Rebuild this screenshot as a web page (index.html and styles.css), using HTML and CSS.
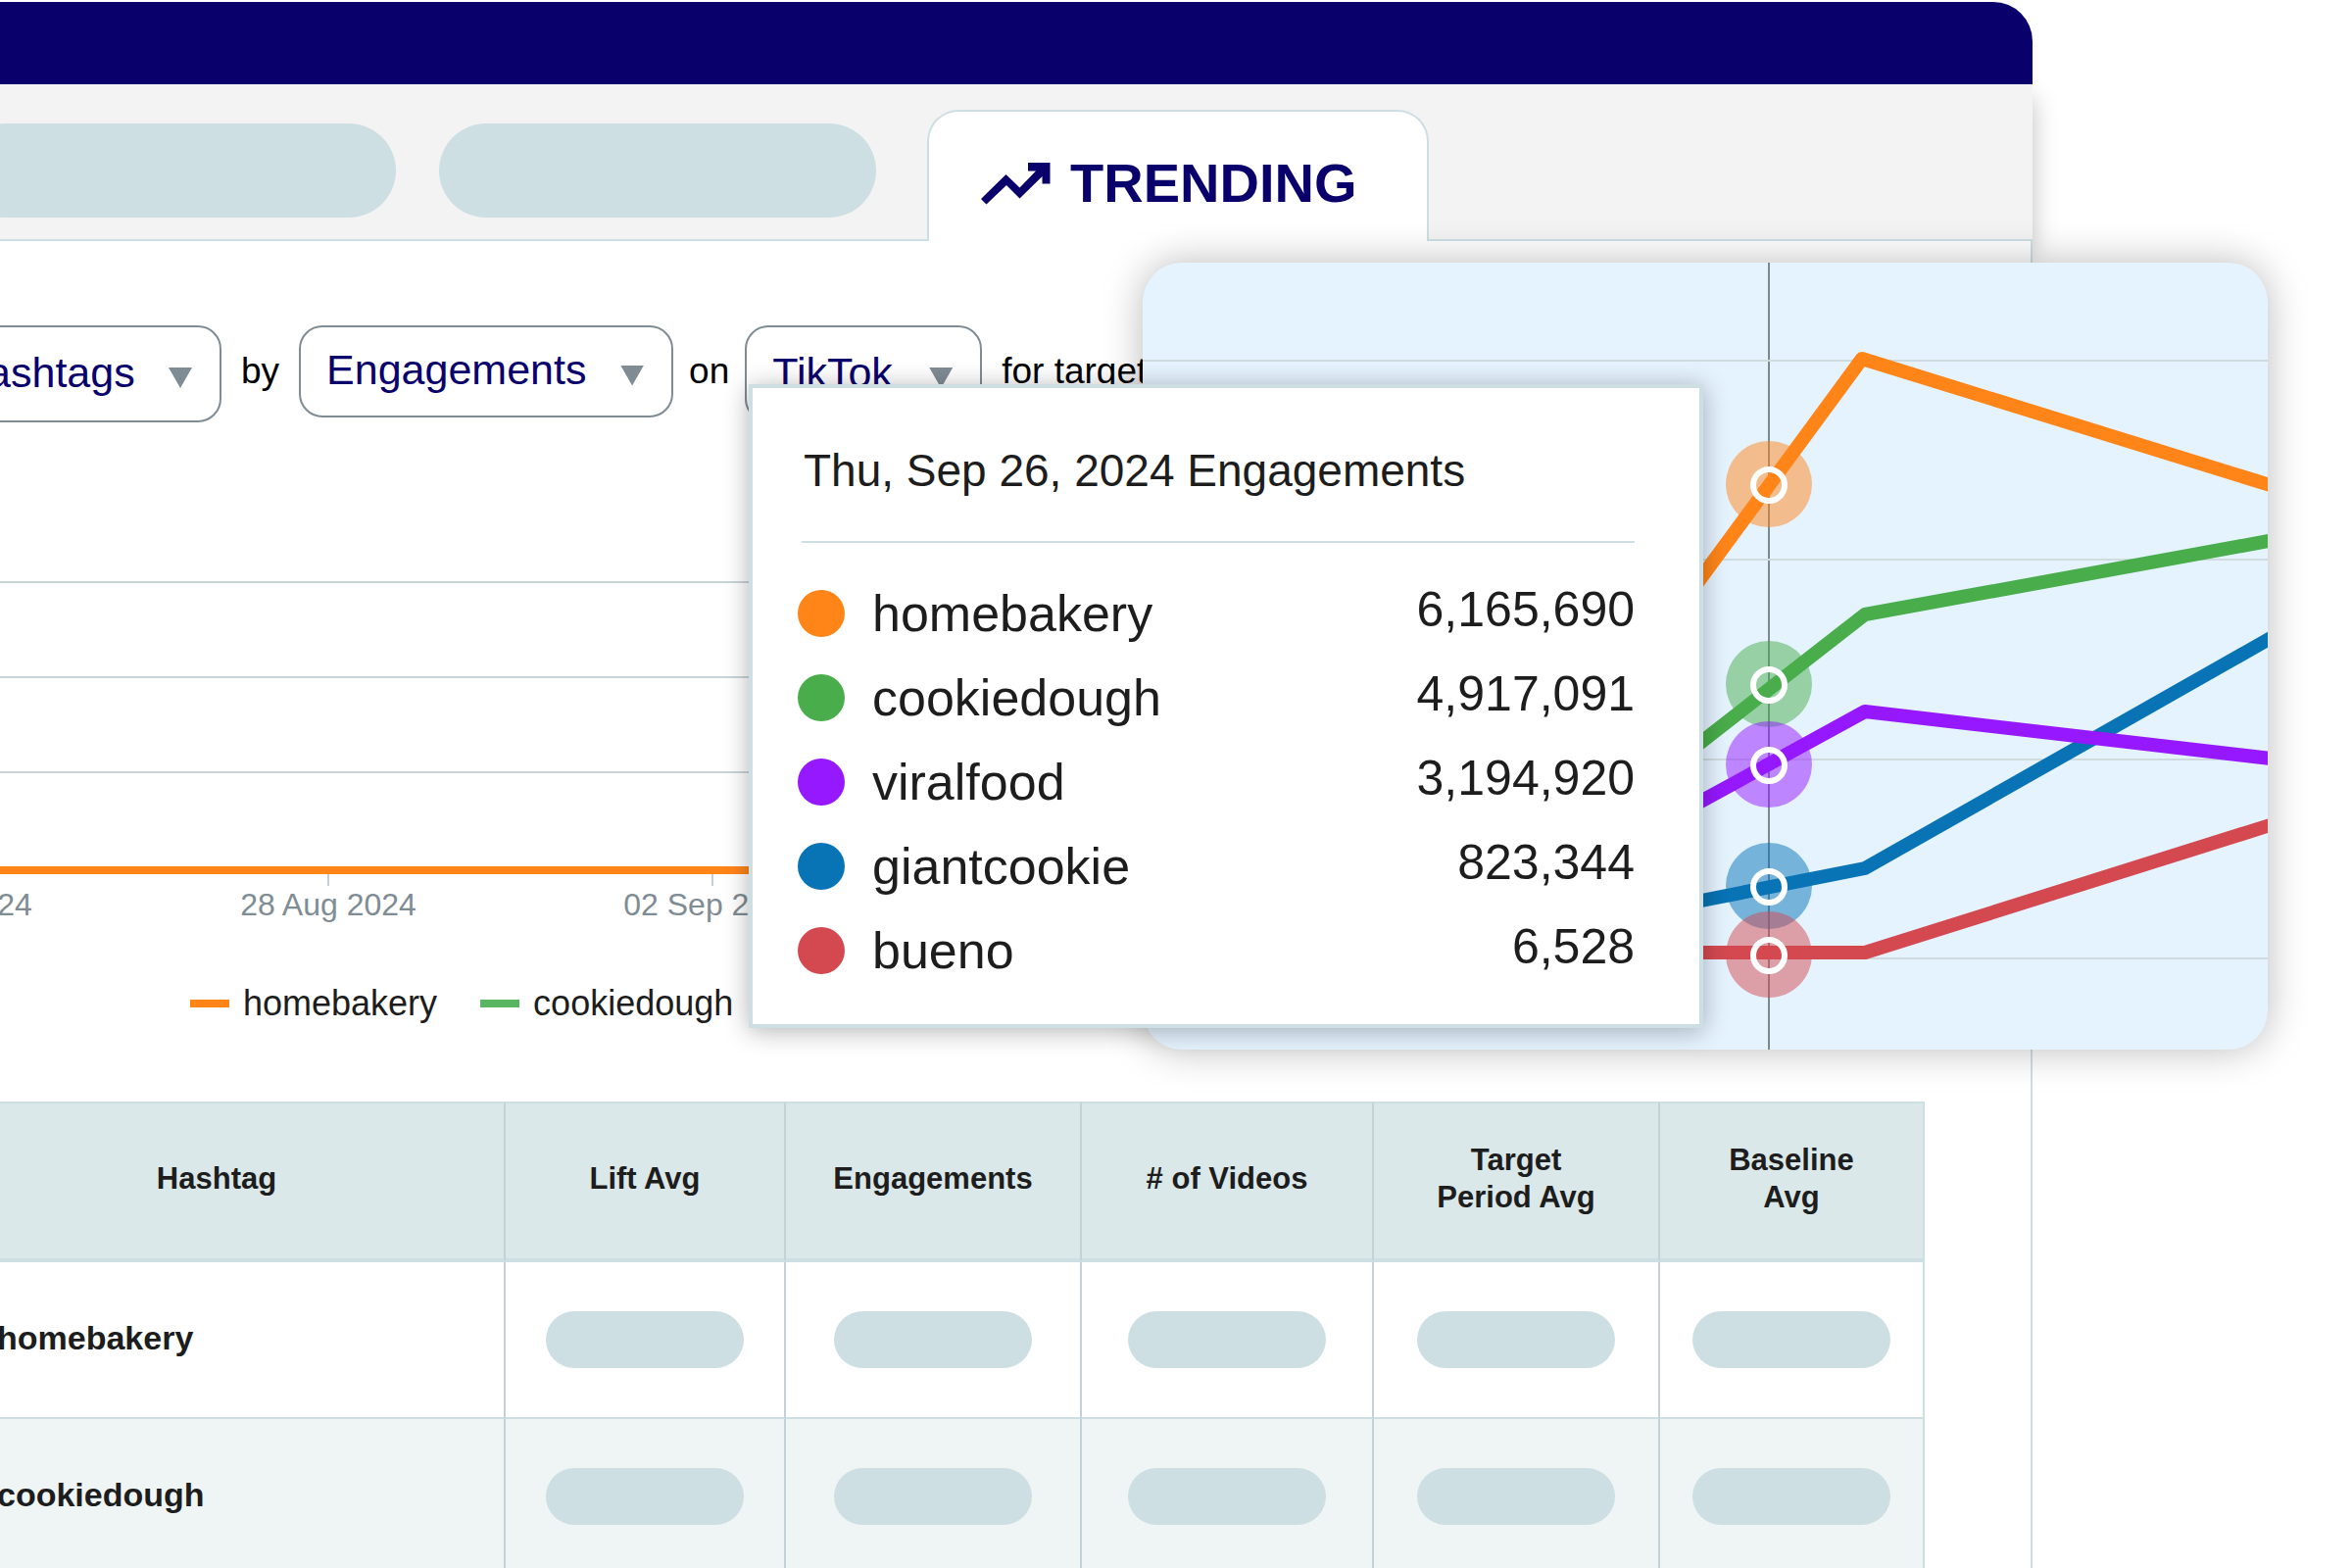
FILE: index.html
```html
<!DOCTYPE html>
<html lang="en">
<head>
<meta charset="utf-8">
<title>Trending</title>
<link rel="stylesheet" href="styles.css">
</head>
<body>
<main class="stage">
  <section class="window">
    <header class="titlebar"></header>
    <nav class="tabs">
      <span class="tabs-placeholder"></span>
      <span class="tabs-placeholder"></span>
      <button class="tab" type="button">
        <svg class="tab-icon" viewBox="0 0 71 43" aria-hidden="true"><path d="M48 0H70.500V21.500H62.500V14L39.500 36.500 26 23 5.500 42.500 0 37 25.500 12 39.500 25.500 56 8.500H48Z"/></svg>
        TRENDING
      </button>
    </nav>
    <div class="panel">
      <form class="filters">
        <span class="picker picker-topic">
          <select class="picker-select" aria-label="Topic"><option>Hashtags</option></select>
          <span class="picker-arrow"></span>
        </span>
        <label class="word word-spaced" for="metric">by</label>
        <span class="picker picker-metric">
          <select class="picker-select" id="metric"><option>Engagements</option></select>
          <span class="picker-arrow"></span>
        </span>
        <label class="word" for="network">on</label>
        <span class="picker picker-network">
          <select class="picker-select" id="network"><option>TikTok</option></select>
          <span class="picker-arrow"></span>
        </span>
        <span class="word word-spaced">for target</span>
      </form>

      <div class="plot">
        <div class="band"></div>
        <div class="band"></div>
        <div class="band"></div>
        <div class="series"></div>
        <ul class="axis">
          <li class="axis-label">23 Aug 2024</li>
          <li class="axis-label">28 Aug 2024</li>
          <li class="axis-label">02 Sep 2024</li>
        </ul>
      </div>
      <ul class="legend">
        <li class="legend-item"><span class="dash dash-orange"></span>homebakery</li>
        <li class="legend-item"><span class="dash dash-green"></span>cookiedough</li>
      </ul>

      <table class="results">
        <colgroup>
          <col class="col-hashtag"><col class="col-lift"><col class="col-engagements"><col class="col-videos"><col class="col-target"><col>
        </colgroup>
        <thead>
          <tr>
            <th>Hashtag</th><th>Lift Avg</th><th>Engagements</th><th># of Videos</th><th>Target<br>Period Avg</th><th>Baseline<br>Avg</th>
          </tr>
        </thead>
        <tbody>
          <tr>
            <td class="name">homebakery</td>
            <td><span class="pill"></span></td><td><span class="pill"></span></td><td><span class="pill"></span></td><td><span class="pill"></span></td><td><span class="pill"></span></td>
          </tr>
          <tr>
            <td class="name">cookiedough</td>
            <td><span class="pill"></span></td><td><span class="pill"></span></td><td><span class="pill"></span></td><td><span class="pill"></span></td><td><span class="pill"></span></td>
          </tr>
        </tbody>
      </table>
    </div>
  </section>

  <figure class="detail">
    <svg class="detail-chart" viewBox="0 0 1148 803" aria-hidden="true">
      <path class="cursor" d="M639 0V803"/>
      <path class="gridline" d="M0 100H1148M0 303H1148M0 507H1148M0 710H1148"/>
      <g class="blue">
        <circle class="halo" cx="639" cy="636" r="44"/>
        <polyline class="line" points="560,653 737,618 1160,378"/>
      </g>
      <g class="orange">
        <circle class="halo" cx="639" cy="226" r="44"/>
        <polyline class="line" points="560,335 734,98 1160,230"/>
      </g>
      <g class="green">
        <circle class="halo" cx="639" cy="430" r="44"/>
        <polyline class="line" points="560,497 737,359 1160,282"/>
      </g>
      <g class="purple">
        <circle class="halo" cx="639" cy="512" r="44"/>
        <polyline class="line" points="560,555 737,458 1160,507"/>
      </g>
      <g class="red">
        <circle class="halo" cx="639" cy="706" r="44"/>
        <polyline class="line" points="560,704 737,704 1160,571"/>
      </g>
      <g class="ring">
        <circle cx="639" cy="227" r="16"/>
        <circle cx="639" cy="431" r="16"/>
        <circle cx="639" cy="513" r="16"/>
        <circle cx="639" cy="637" r="16"/>
        <circle cx="639" cy="707" r="16"/>
      </g>
    </svg>
  </figure>

  <aside class="tooltip">
    <h2 class="tooltip-title">Thu, Sep 26, 2024 Engagements</h2>
    <dl class="counts">
      <div class="count"><dt class="count-name"><span class="dot dot-orange"></span>homebakery</dt><dd class="count-value">6,165,690</dd></div>
      <div class="count"><dt class="count-name"><span class="dot dot-green"></span>cookiedough</dt><dd class="count-value">4,917,091</dd></div>
      <div class="count"><dt class="count-name"><span class="dot dot-purple"></span>viralfood</dt><dd class="count-value">3,194,920</dd></div>
      <div class="count"><dt class="count-name"><span class="dot dot-blue"></span>giantcookie</dt><dd class="count-value">823,344</dd></div>
      <div class="count"><dt class="count-name"><span class="dot dot-red"></span>bueno</dt><dd class="count-value">6,528</dd></div>
    </dl>
  </aside>
</main>
</body>
</html>
```
FILE: styles.css
```css
:root {
  --navy: #09006c;
  --ink: #1d1d1d;
  --slate: #808c94;
  --mist: #cddfe3;
  --orange: #ff8519;
  --green: #48ad4a;
  --purple: #9618ff;
  --blue: #0873b5;
  --red: #d44950;
}

* { box-sizing: border-box; }

body {
  margin: 0;
  background: #fff;
  color: var(--ink);
  font-family: "Liberation Sans", Arial, sans-serif;
}

ul, dl, dd, figure, h2 { margin: 0; padding: 0; list-style: none; }

.stage {
  position: relative;
  height: 100vh;
  overflow: hidden;
  padding-top: 2px;
}

/* Application window, running off the left edge */
.window { margin: 0 326px 0 -72px; }

.titlebar {
  position: relative;
  z-index: 1;
  height: 84px;
  border-top-right-radius: 40px;
  background: var(--navy);
}

.tabs {
  display: flex;
  align-items: flex-end;
  height: 160px;
  padding-left: 30px;
  border-bottom: 2px solid var(--mist);
  background: #f3f3f3;
  box-shadow: 0 14px 24px rgba(0, 0, 0, 0.25);
}

.tabs-placeholder {
  width: 446px;
  height: 96px;
  margin: 0 44px 22px 0;
  border-radius: 48px;
  background: var(--mist);
}

.tab {
  position: relative;
  z-index: 2;
  display: flex;
  align-items: center;
  gap: 20px;
  width: 512px;
  height: 134px;
  margin: 0 0 -2px 8px;
  padding: 14px 0 0 53px;
  border: 2px solid var(--mist);
  border-bottom: 0;
  border-radius: 32px 32px 0 0;
  background: #fff;
  color: var(--navy);
  font: bold 56px/64px "Liberation Sans", Arial, sans-serif;
}

.tab-icon { width: 71px; height: 43px; fill: currentColor; }

.panel {
  position: relative;
  padding-top: 86px;
  border-right: 2px solid var(--mist);
  background: #fff;
}

/* Filter sentence */
.filters {
  display: flex;
  align-items: flex-start;
  gap: 16px;
  height: 99px;
  white-space: nowrap;
}

.picker { display: grid; height: 99px; }
.picker-topic { width: 298px; }
.picker-metric { width: 382px; height: 94px; }
.picker-network { width: 242px; }

.picker-select {
  grid-area: 1 / 1;
  min-width: 0;
  appearance: none;
  padding: 0 26px 4px;
  border: 2px solid var(--slate);
  border-radius: 24px;
  background: #fff;
  color: var(--navy);
  font: 43px/50px "Liberation Sans", Arial, sans-serif;
}

.picker-arrow {
  grid-area: 1 / 1;
  place-self: center end;
  width: 24px;
  height: 21px;
  margin: 8px 30px 0 0;
  background: var(--slate);
  clip-path: polygon(0 0, 100% 0, 50% 100%);
  pointer-events: none;
}

.word { color: #000; font-size: 37px; line-height: 94px; }
.word-spaced { padding: 0 4px; }

/* Daily chart */
.plot { margin-top: 162px; }
.band { height: 97px; border-top: 2px solid #c8d5d8; }
.series { height: 8px; background: var(--orange); }

.axis { display: flex; margin-left: -181px; }

.axis-label {
  display: flex;
  flex: 0 0 392px;
  flex-direction: column;
  align-items: center;
  color: var(--slate);
  font-size: 32px;
  line-height: 38px;
}

.axis-label::before {
  content: "";
  width: 2px;
  height: 12px;
  background: #c5cfd5;
}

.legend {
  display: flex;
  gap: 44px;
  margin-top: 60px;
  padding-left: 266px;
  font-size: 36px;
  line-height: 44px;
}

.legend-item { display: flex; align-items: center; gap: 14px; }
.dash { width: 40px; height: 8px; }
.dash-orange { background: var(--orange); }
.dash-green { background: #5ab562; }

/* Results */
.results {
  width: calc(100% - 108px);
  margin-top: 78px;
  border-spacing: 0;
  table-layout: fixed;
}

.col-hashtag { width: 588px; }
.col-lift { width: 286px; }
.col-engagements { width: 302px; }
.col-videos { width: 298px; }
.col-target { width: 292px; }

.results th {
  height: 164px;
  padding: 0 0 4px;
  border: solid var(--mist);
  border-width: 2px 2px 4px 0;
  border-right-color: #c4d1d6;
  background: #dbe8e9;
  font-size: 31px;
  line-height: 38px;
}

.results td {
  height: 160px;
  padding: 0;
  border: solid var(--mist);
  border-width: 0 2px 2px 0;
  border-right-color: #c4d1d6;
}

.results tr > :last-child { border-right-color: var(--mist); }
.results tbody tr:nth-child(even) { background: #eff5f5; }
.results .name { padding: 0 0 4px 69px; font-size: 34px; font-weight: bold; line-height: 40px; }

.pill {
  display: block;
  width: 202px;
  height: 58px;
  margin: 0 auto;
  border-radius: 29px;
  background: var(--mist);
}

/* Enlarged chart floating over the window */
.detail {
  position: absolute;
  z-index: 3;
  top: 268px;
  right: 86px;
  width: 1148px;
  border-radius: 40px;
  background: #e5f3ff;
  box-shadow: 0 0 42px rgba(0, 0, 0, 0.27);
}

.detail-chart {
  display: block;
  width: 100%;
  border-radius: 40px;
  fill: none;
}

.cursor { stroke: #7c898f; stroke-width: 2; }
.gridline { stroke: #d0dbdf; stroke-width: 2; }
.orange { color: var(--orange); }
.green { color: var(--green); }
.purple { color: var(--purple); }
.blue { color: var(--blue); }
.red { color: var(--red); }
.halo { fill: currentColor; fill-opacity: 0.5; }
.line { stroke: currentColor; stroke-width: 14; stroke-linejoin: round; }
.ring { stroke: #fff; stroke-width: 6; }

.tooltip {
  position: absolute;
  z-index: 4;
  top: 392px;
  right: 662px;
  width: 974px;
  padding: 56px 66px 32px 46px;
  border: 4px solid var(--mist);
  background: #fff;
  box-shadow: 0 3px 24px rgba(0, 0, 0, 0.3);
}

.tooltip-title {
  margin: 0 0 29px 4px;
  padding: 0 2px 44px;
  border-bottom: 2px solid var(--mist);
  font-size: 46px;
  font-weight: normal;
  line-height: 56px;
  white-space: nowrap;
}

.count { display: flex; align-items: center; justify-content: space-between; height: 86px; }
.count-name { display: flex; align-items: center; gap: 28px; font-size: 52px; line-height: 60px; }
.count-value { padding-bottom: 8px; font-size: 50px; line-height: 60px; }

.dot { width: 48px; height: 48px; border-radius: 50%; }
.dot-orange { background: var(--orange); }
.dot-green { background: var(--green); }
.dot-purple { background: var(--purple); }
.dot-blue { background: var(--blue); }
.dot-red { background: var(--red); }
```
